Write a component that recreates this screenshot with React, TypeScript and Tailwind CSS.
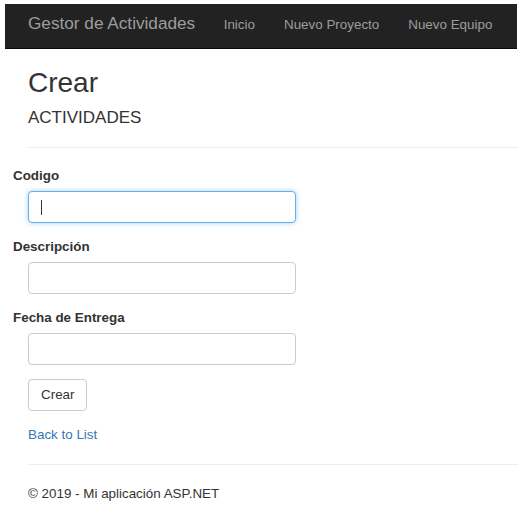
import React from "react";

const links = ["Inicio", "Nuevo Proyecto", "Nuevo Equipo"];

function Field({ label, focused }: { label: string; focused?: boolean }) {
  return (
    <div className="mb-[14px]">
      <label className="block pl-[13px] text-[13.4px] font-bold leading-[20px] text-[#333]">{label}</label>
      <div className="mt-[5px] ml-[28px]">
        {focused ? (
          <div className="relative flex h-[32px] w-[268px] items-center rounded-[4px] border border-[#66afe9] bg-white pl-[12px] shadow-[0_0_5px_rgba(102,175,233,0.6)]">
            <span className="block h-[15px] w-px bg-[#333]" />
          </div>
        ) : (
          <input
            type="text"
            className="block h-[32px] w-[268px] rounded-[4px] border border-[#ccc] bg-white px-[12px] text-[13px] text-[#555] outline-none"
          />
        )}
      </div>
    </div>
  );
}

export default function App() {
  return (
    <div className="h-[515px] w-full bg-white pt-[4px] font-['Liberation_Sans',Arial,sans-serif] text-[#333]">
      <nav className="ml-[5px] flex h-[45px] w-[512px] items-baseline border-b border-[#080808] bg-[#222] pl-[23px] pt-[9px]">
        <span className="pr-[14px] text-[17.2px] leading-[20px] text-[#9d9d9d]">Gestor de Actividades</span>
        {links.map((l) => (
          <a key={l} href="#" className="px-[14.5px] text-[13.4px] leading-[20px] text-[#9d9d9d]">
            {l}
          </a>
        ))}
      </nav>

      <div className="pl-[28px]">
        <h2 className="mt-[18px] text-[28px] leading-[32px]">Crear</h2>
        <h4 className="mt-[9px] text-[17px] leading-[20px]">ACTIVIDADES</h4>
        <hr className="mt-[19px] w-[490px] border-t border-[#eee]" />
      </div>

      <form className="mt-[18px]" onSubmit={(e) => e.preventDefault()}>
        <Field label="Codigo" focused />
        <Field label="Descripción" />
        <Field label="Fecha de Entrega" />
        <div className="ml-[28px] mt-[2px]">
          <button
            type="submit"
            className="block h-[32px] rounded-[4px] border border-[#ccc] bg-white px-[12px] text-[13.4px] leading-[20px] text-[#333]"
          >
            Crear
          </button>
        </div>
      </form>

      <div className="pl-[28px]">
        <a href="#" className="mt-[14px] block text-[13.4px] leading-[20px] text-[#337ab7]">
          Back to List
        </a>
        <hr className="mt-[19px] w-[490px] border-t border-[#eee]" />
        <footer className="mt-[19px] text-[13.4px] leading-[20px]">© 2019 - Mi aplicación ASP.NET</footer>
      </div>
    </div>
  );
}
